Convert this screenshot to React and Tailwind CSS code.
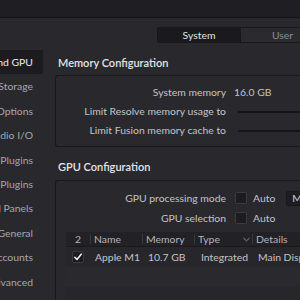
import React from 'react';

const sidebarItems = [
  'Memory and GPU',
  'Media Storage',
  'Decode Options',
  'Video and Audio I/O',
  'Audio Plugins',
  'Video Plugins',
  'Control Panels',
  'General',
  'Internet Accounts',
  'Advanced',
];

const Checkbox = ({ checked }) => (
  <div className="w-[12px] h-[12px] rounded-[2px] bg-[#1c1c1f] border border-[#3a3a3f] flex items-center justify-center shrink-0">
    {checked && (
      <svg viewBox="0 0 12 12" className="w-[10px] h-[10px]">
        <path d="M2.2 6.4 L4.8 9 L9.8 2.6" fill="none" stroke="#f2f2f2" strokeWidth="1.8" strokeLinecap="round" strokeLinejoin="round" />
      </svg>
    )}
  </div>
);

const App = () => {
  return (
    <div
      className="w-[300px] h-[300px] overflow-hidden bg-[#28282d] text-[#c4c4c8] text-[10.4px] leading-none"
      style={{ fontFamily: 'Lato, "Open Sans", sans-serif' }}
    >
      {/* Top bar */}
      <div className="h-[18px] bg-[#1f1f23] border-b border-[#141416]" />

      {/* Tabs */}
      <div className="flex pl-[157px] pt-[9px]">
        <div className="flex shrink-0 w-[170px] h-[16px] border border-[#18181b] rounded-l-[2px] overflow-hidden">
          <div className="w-[82px] bg-[#1a1a1d] flex items-center justify-center text-[#e2e2e4]">System</div>
          <div className="w-[84px] border-l border-[#18181b] bg-[#2a2a2f] flex items-center justify-center text-[#8e8e93]">User</div>
        </div>
      </div>

      <div className="flex mt-[7px]">
        {/* Sidebar */}
        <div className="w-[43px] shrink-0 flex flex-col">
          {sidebarItems.map((item, i) => (
            <div
              key={item}
              className={`h-[24.4px] flex items-center justify-end overflow-hidden whitespace-nowrap pr-[10px] ${
                i === 0 ? 'bg-[#1c1c20] text-[#ececee]' : 'text-[#a7a7ac]'
              }`}
            >
              {item}
            </div>
          ))}
        </div>

        {/* Main */}
        <div className="flex-1 pl-[12px] flex flex-col">
          <div className="h-[25px] flex items-center pl-[3px] text-[#e4e4e6] font-semibold text-[11px]">Memory Configuration</div>
          <div className="h-[72px] border border-[#18181b] border-r-0 rounded-l-[3px] flex flex-col pt-[7px]">
            <div className="h-[19px] flex items-center">
              <div className="w-[170px] text-right shrink-0">System memory</div>
              <div className="ml-[8px] whitespace-nowrap">16.0 GB</div>
            </div>
            <div className="h-[19px] flex items-center">
              <div className="w-[170px] text-right shrink-0 whitespace-nowrap">Limit Resolve memory usage to</div>
              <div className="ml-[12px] flex-1 h-[2px] bg-[#151517]" />
            </div>
            <div className="h-[19px] flex items-center">
              <div className="w-[170px] text-right shrink-0 whitespace-nowrap">Limit Fusion memory cache to</div>
              <div className="ml-[12px] flex-1 h-[2px] bg-[#151517]" />
            </div>
          </div>

          <div className="h-[33px] flex items-center pl-[3px] text-[#e4e4e6] font-semibold text-[11px] pt-[5px]">GPU Configuration</div>
          <div className="h-[130px] border border-[#18181b] border-r-0 border-b-0 rounded-tl-[3px] flex flex-col pt-[7px]">
            <div className="h-[20px] flex items-center">
              <div className="w-[170px] text-right shrink-0 whitespace-nowrap">GPU processing mode</div>
              <div className="ml-[9px]"><Checkbox /></div>
              <div className="ml-[6px]">Auto</div>
              <div className="ml-[11px] h-[15px] px-[5px] bg-[#1e1e22] border border-[#18181b] rounded-[2px] flex items-center text-[#d0d0d3] whitespace-nowrap">Metal</div>
            </div>
            <div className="h-[20px] flex items-center">
              <div className="w-[170px] text-right shrink-0 whitespace-nowrap">GPU selection</div>
              <div className="ml-[9px]"><Checkbox /></div>
              <div className="ml-[6px]">Auto</div>
            </div>

            {/* Table */}
            <div className="ml-[10px] mt-[4px] flex flex-col">
              <div className="h-[15px] bg-[#222226] flex items-center text-[#b4b4b8] whitespace-nowrap border-b border-[#1a1a1d]">
                <div className="w-[24px] text-center shrink-0">2</div>
                <div className="w-[52px] border-l border-[#38383d] pl-[3px] shrink-0">Name</div>
                <div className="w-[52px] border-l border-[#38383d] pl-[3px] shrink-0">Memory</div>
                <div className="w-[58px] border-l border-[#38383d] pl-[3px] shrink-0 flex items-center justify-between pr-[2px]">
                  <span>Type</span>
                  <svg viewBox="0 0 8 5" className="w-[7px] h-[5px]">
                    <path d="M0.5 0.8 L4 4 L7.5 0.8" fill="none" stroke="#9a9a9f" strokeWidth="1" />
                  </svg>
                </div>
                <div className="flex-1 border-l border-[#38383d] pl-[3px]">Details</div>
              </div>
              <div className="h-[20px] bg-[#27272b] flex items-center whitespace-nowrap">
                <div className="w-[24px] flex justify-center shrink-0"><Checkbox checked /></div>
                <div className="w-[52px] pl-[5px] shrink-0">Apple M1</div>
                <div className="w-[52px] pl-[6px] shrink-0">10.7 GB</div>
                <div className="w-[58px] pl-[7px] shrink-0">Integrated</div>
                <div className="flex-1 pl-[6px]">Main Display</div>
              </div>
              <div className="h-[20px] bg-[#2a2a2e]" />
              <div className="h-[20px] bg-[#27272b]" />
            </div>
          </div>
        </div>
      </div>
    </div>
  );
};

export default App;
